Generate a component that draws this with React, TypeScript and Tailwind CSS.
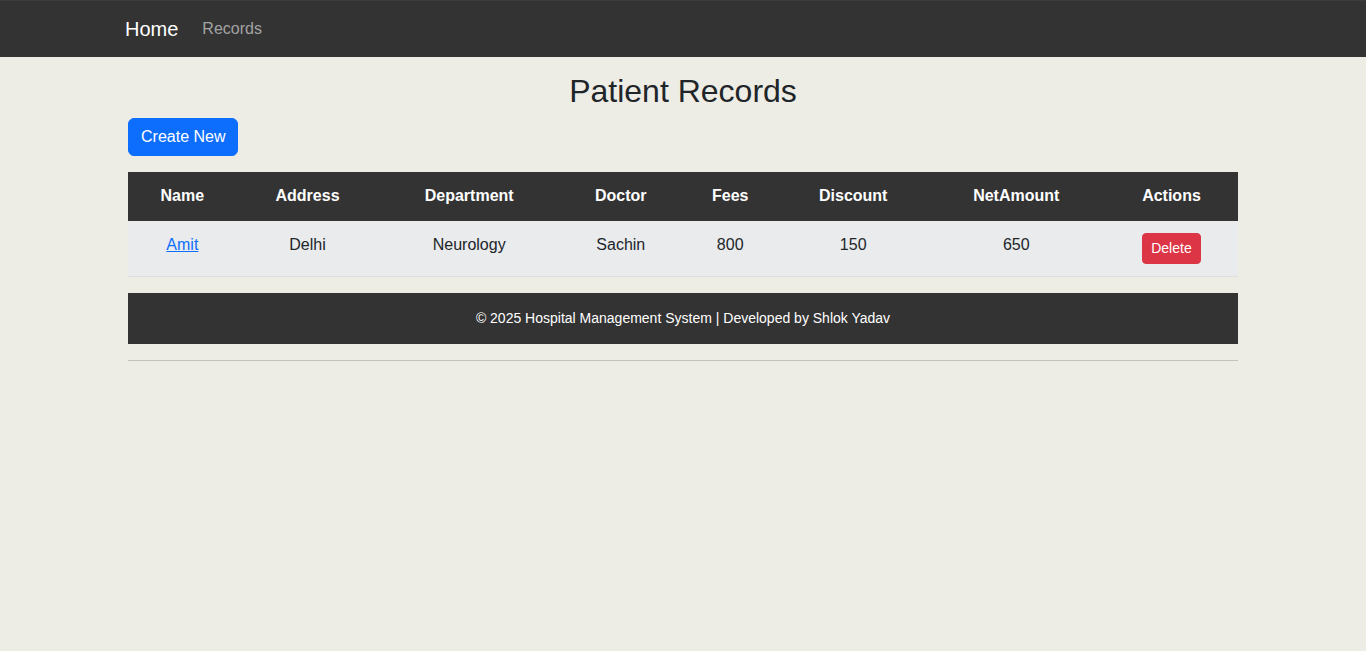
import React from "react";

const rows = [
  { name: "Amit", address: "Delhi", department: "Neurology", doctor: "Sachin", fees: 800, discount: 150, net: 650 },
];

const headers = ["Name", "Address", "Department", "Doctor", "Fees", "Discount", "NetAmount", "Actions"];

export default function App() {
  return (
    <div className="min-h-[651px] bg-[#eeede5] text-[#212529]" style={{ fontFamily: '"Liberation Sans", Arial, sans-serif' }}>
      <nav className="h-[57px] bg-[#333333] border-t border-t-[#3c3c3c]">
        <div className="mx-auto flex h-full w-[1140px] items-center px-3">
          <a className="text-[20px] leading-[30px] text-white mr-6 pb-[1px]" href="#">Home</a>
          <a className="text-[16px] leading-6 text-[#a3a3a3]" href="#">Records</a>
        </div>
      </nav>
      <main className="mx-auto w-[1140px] px-[15px]">
        <h2 className="mt-[15px] text-center text-[32px] leading-[38px] font-normal">Patient Records</h2>
        <button className="mt-[8px] rounded-md border border-[#0d6efd] bg-[#0d6efd] px-3 py-[6px] text-[16px] leading-6 text-white">
          Create New
        </button>
        <table className="mt-4 w-full border-collapse text-center text-[16px] leading-6">
          <thead>
            <tr className="bg-[#333333] text-white">
              {headers.map((h) => (
                <th key={h} className="p-3 font-bold border-b border-[#333333]">{h}</th>
              ))}
            </tr>
          </thead>
          <tbody>
            {rows.map((r) => (
              <tr key={r.name} className="bg-[#e9ebec] border-b border-[#dcdedf]">
                <td className="p-3 align-top">
                  <a href="#" className="text-[#0d6efd] underline">{r.name}</a>
                </td>
                <td className="p-3 align-top">{r.address}</td>
                <td className="p-3 align-top">{r.department}</td>
                <td className="p-3 align-top">{r.doctor}</td>
                <td className="p-3 align-top">{r.fees}</td>
                <td className="p-3 align-top">{r.discount}</td>
                <td className="p-3 align-top">{r.net}</td>
                <td className="p-3 align-top">
                  <button className="rounded-[4px] border border-[#dc3545] bg-[#dc3545] px-2 py-1 text-[14px] leading-[21px] text-white">
                    Delete
                  </button>
                </td>
              </tr>
            ))}
          </tbody>
        </table>
        <footer className="mt-4 bg-[#333333] py-[15px] text-center text-[14px] leading-[21px] text-white">
          © 2025 Hospital Management System | Developed by Shlok Yadav
        </footer>
        <hr className="mt-4 border-t border-[#c2c2ba]" />
      </main>
    </div>
  );
}
